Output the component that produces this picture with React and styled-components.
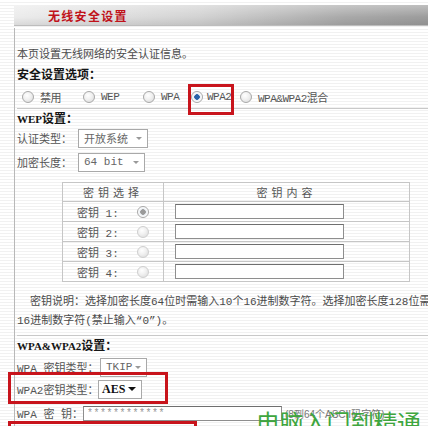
import React from 'react';
import styled, { createGlobalStyle } from 'styled-components';

const GlobalStyle = createGlobalStyle`
  html, body {
    margin: 0;
    padding: 0;
  }
  body {
    width: 428px;
    height: 426px;
    overflow: hidden;
    background: repeating-linear-gradient(to bottom, #ffffff 0, #ffffff 2px, #f1f1f1 2px, #f1f1f1 3px);
    font-family: "Liberation Mono", "Noto Sans CJK SC", monospace;
    font-size: 11px;
    color: #4a4a4a;
  }
`;

const Page = styled.div`
  position: relative;
  width: 428px;
  height: 426px;
  padding-top: 5px;
  box-sizing: border-box;
`;

const HeaderBar = styled.div`
  margin-left: 14px;
  height: 20px;
  display: flex;
  align-items: center;
  padding-left: 34px;
  background:
    linear-gradient(to bottom, rgba(255, 255, 255, 0.35), rgba(255, 255, 255, 0) 60%, rgba(0, 0, 0, 0.08)),
    linear-gradient(to right, #ececec, #d2d2d2 45%, #a9a9a9 80%, #9c9c9c);
  border-bottom: 1px solid #bdbdbd;
`;

const Title = styled.span`
  color: #c0121a;
  font-family: "Noto Sans CJK SC", sans-serif;
  font-weight: 700;
  font-size: 12px;
  letter-spacing: 1.3px;
`;

const Panel = styled.div`
  margin-left: 14px;
  margin-top: 2px;
  border-left: 1px solid #b8b8b8;
  padding: 18px 0 0 2px;
  height: 400px;
  box-sizing: border-box;
`;

const Line = styled.div`
  line-height: 18px;
  height: 18px;
  white-space: nowrap;
  margin-top: ${(p) => p.$mt || 0}px;
`;

const SectionTitle = styled.div`
  line-height: 18px;
  height: 18px;
  margin-top: ${(p) => p.$mt || 0}px;
  font-family: "Noto Sans CJK SC", sans-serif;
  font-weight: 700;
  font-size: 12px;
  color: #151515;
  white-space: nowrap;
`;

const CodeTitle = styled.span`
  font-family: "Liberation Serif", serif;
  font-weight: 700;
  font-size: 11px;
`;

const RadioRow = styled.div`
  display: flex;
  align-items: center;
  height: 18px;
  margin-top: 5px;
  padding-left: 5px;
`;

const Option = styled.label`
  display: flex;
  align-items: center;
  width: ${(p) => p.$w}px;
  flex: none;
  white-space: nowrap;
  color: #555;
  letter-spacing: -0.5px;
`;

const Radio = styled.span`
  width: 10px;
  height: 10px;
  flex: none;
  border-radius: 50%;
  border: 1px solid ${(p) => (p.$faint ? '#cfcfcf' : '#a8a8a8')};
  background: ${(p) =>
    p.$checked
      ? `radial-gradient(circle, ${p.$dot} 0, ${p.$dot} 2.5px, #e9eef3 3px, #ffffff 5px)`
      : 'radial-gradient(circle at 40% 35%, #ffffff 0, #f0f0f0 45%, #d8d8d8 100%)'};
  margin-right: ${(p) => p.$mr || 0}px;
`;

const Separator = styled.div`
  height: 1px;
  background: #c9c9c9;
  margin-top: ${(p) => p.$mt || 0}px;
`;

const FormRow = styled.div`
  display: flex;
  align-items: center;
  height: ${(p) => p.$h || 20}px;
  margin-top: ${(p) => p.$mt || 0}px;
  white-space: nowrap;
`;

const Label = styled.span`
  width: ${(p) => p.$w}px;
  flex: none;
  color: #555;
`;

const Select = styled.div`
  width: ${(p) => p.$w}px;
  height: 19px;
  box-sizing: border-box;
  border: 1px solid #a9a9a9;
  background: #fff;
  display: flex;
  align-items: center;
  justify-content: space-between;
  padding: 0 5px 0 ${(p) => (p.$strong ? 3 : 5)}px;
  color: ${(p) => (p.$strong ? '#111' : '#666')};
  font-family: ${(p) => (p.$strong ? '"Liberation Serif", serif' : 'inherit')};
  font-weight: ${(p) => (p.$strong ? 700 : 400)};
  font-size: ${(p) => (p.$strong ? 12 : 11)}px;
`;

const Arrow = styled.span`
  width: 0;
  height: 0;
  border-left: ${(p) => (p.$strong ? 4 : 3)}px solid transparent;
  border-right: ${(p) => (p.$strong ? 4 : 3)}px solid transparent;
  border-top: ${(p) => (p.$strong ? 4 : 3)}px solid ${(p) => (p.$strong ? '#111' : '#999')};
`;

const KeyTable = styled.table`
  margin: 10px 0 0 45px;
  width: 348px;
  border-collapse: collapse;
  border: 1px solid #a6a6a6;
  font-size: 11px;
`;

const HeadCell = styled.td`
  height: 18px;
  border: 1px solid #c6c6c6;
  text-align: center;
  letter-spacing: 4px;
  color: #555;
  padding: 0;
  font-family: "Noto Sans CJK SC", sans-serif;
  width: ${(p) => p.$w || 'auto'};
`;

const Cell = styled.td`
  height: 19px;
  border: 1px solid #c6c6c6;
  padding: 0;
`;

const KeyPick = styled.div`
  display: flex;
  align-items: center;
  padding-left: 14px;
  color: #555;
`;

const KeyName = styled.span`
  width: 60px;
  flex: none;
`;

const KeyInputWrap = styled.div`
  padding-left: 11px;
  display: flex;
  align-items: center;
`;

const TextBox = styled.div`
  width: ${(p) => p.$w}px;
  height: 15px;
  box-sizing: border-box;
  border: 1px solid #8e8e8e;
  border-top-color: #6f6f6f;
  background: #fff;
  color: #999;
  font-size: 10px;
  line-height: 13px;
  padding-left: 3px;
  letter-spacing: 0.5px;
`;

const Note = styled.div`
  margin-top: 11px;
  line-height: 19px;
  white-space: nowrap;
  color: #4a4a4a;
`;

const Indent = styled.span`
  padding-left: 13px;
`;

const Hint = styled.span`
  margin-left: 3px;
  font-size: 10px;
  color: #777;
  font-family: "Liberation Sans", "Noto Sans CJK SC", sans-serif;
`;

const Callout = styled.div`
  position: absolute;
  left: ${(p) => p.$x}px;
  top: ${(p) => p.$y}px;
  width: ${(p) => p.$w}px;
  height: ${(p) => p.$h}px;
  border: 3px solid #c8141c;
  box-sizing: border-box;
  pointer-events: none;
`;

const Watermark = styled.div`
  position: absolute;
  left: 256px;
  top: 407px;
  font-family: "Noto Sans CJK SC", sans-serif;
  font-size: 24px;
  line-height: 30px;
  color: #3ea63e;
  letter-spacing: -0.5px;
  white-space: nowrap;
`;

const modes = [
  { label: '禁用', w: 61 },
  { label: 'WEP', w: 60 },
  { label: 'WPA', w: 48 },
  { label: 'WPA2', w: 49, checked: true },
  { label: 'WPA&WPA2混合', w: 120 },
];

const keys = [1, 2, 3, 4];

export default function App() {
  return (
    <Page>
      <GlobalStyle />
      <HeaderBar>
        <Title>无线安全设置</Title>
      </HeaderBar>

      <Panel>
        <Line>本页设置无线网络的安全认证信息。</Line>
        <SectionTitle $mt={1}>安全设置选项：</SectionTitle>

        <RadioRow>
          {modes.map((m) => (
            <Option key={m.label} $w={m.w}>
              <Radio $checked={m.checked} $dot="#2a63a8" $mr={m.checked ? 4 : 6} />
              {m.label}
            </Option>
          ))}
        </RadioRow>

        <Separator $mt={2} />

        <SectionTitle>
          <CodeTitle>WEP</CodeTitle>设置：
        </SectionTitle>
        <FormRow $mt={1}>
          <Label $w={61}>认证类型：</Label>
          <Select $w={70}>
            开放系统
            <Arrow />
          </Select>
        </FormRow>
        <FormRow $mt={4}>
          <Label $w={61}>加密长度：</Label>
          <Select $w={67}>
            64 bit
            <Arrow />
          </Select>
        </FormRow>

        <KeyTable>
          <tbody>
            <tr>
              <HeadCell $w="100px">密钥选择</HeadCell>
              <HeadCell>密钥内容</HeadCell>
            </tr>
            {keys.map((k) => (
              <tr key={k}>
                <Cell>
                  <KeyPick>
                    <KeyName>密钥 {k}:</KeyName>
                    <Radio $checked={k === 1} $dot="#9a9a9a" $faint={k !== 1} />
                  </KeyPick>
                </Cell>
                <Cell>
                  <KeyInputWrap>
                    <TextBox $w={169} />
                  </KeyInputWrap>
                </Cell>
              </tr>
            ))}
          </tbody>
        </KeyTable>

        <Note>
          <Indent>密钥说明：选择加密长度64位时需输入10个16进制数字符。选择加密长度128位需输入</Indent>
          <br />
          16进制数字符(禁止输入“0”)。
        </Note>

        <Separator $mt={4} />

        <SectionTitle>
          <CodeTitle>WPA&amp;WPA2</CodeTitle>设置：
        </SectionTitle>
        <FormRow $mt={3}>
          <Label $w={83}>WPA 密钥类型：</Label>
          <Select $w={47}>
            TKIP
            <Arrow />
          </Select>
        </FormRow>
        <FormRow $mt={2}>
          <Label $w={81}>WPA2密钥类型：</Label>
          <Select $w={44} $strong>
            AES
            <Arrow $strong />
          </Select>
        </FormRow>
        <FormRow $mt={6} $h={16}>
          <Label $w={66}>WPA 密 钥：</Label>
          <TextBox $w={199}>************</TextBox>
          <Hint>(8到64个ASCII码字符)</Hint>
        </FormRow>
      </Panel>

      <Callout $x={188} $y={84} $w={46} $h={31} />
      <Callout $x={8} $y={372} $w={160} $h={32} />
      <Callout $x={8} $y={421} $w={189} $h={20} />
      <Watermark>电脑入门到精通</Watermark>
    </Page>
  );
}
